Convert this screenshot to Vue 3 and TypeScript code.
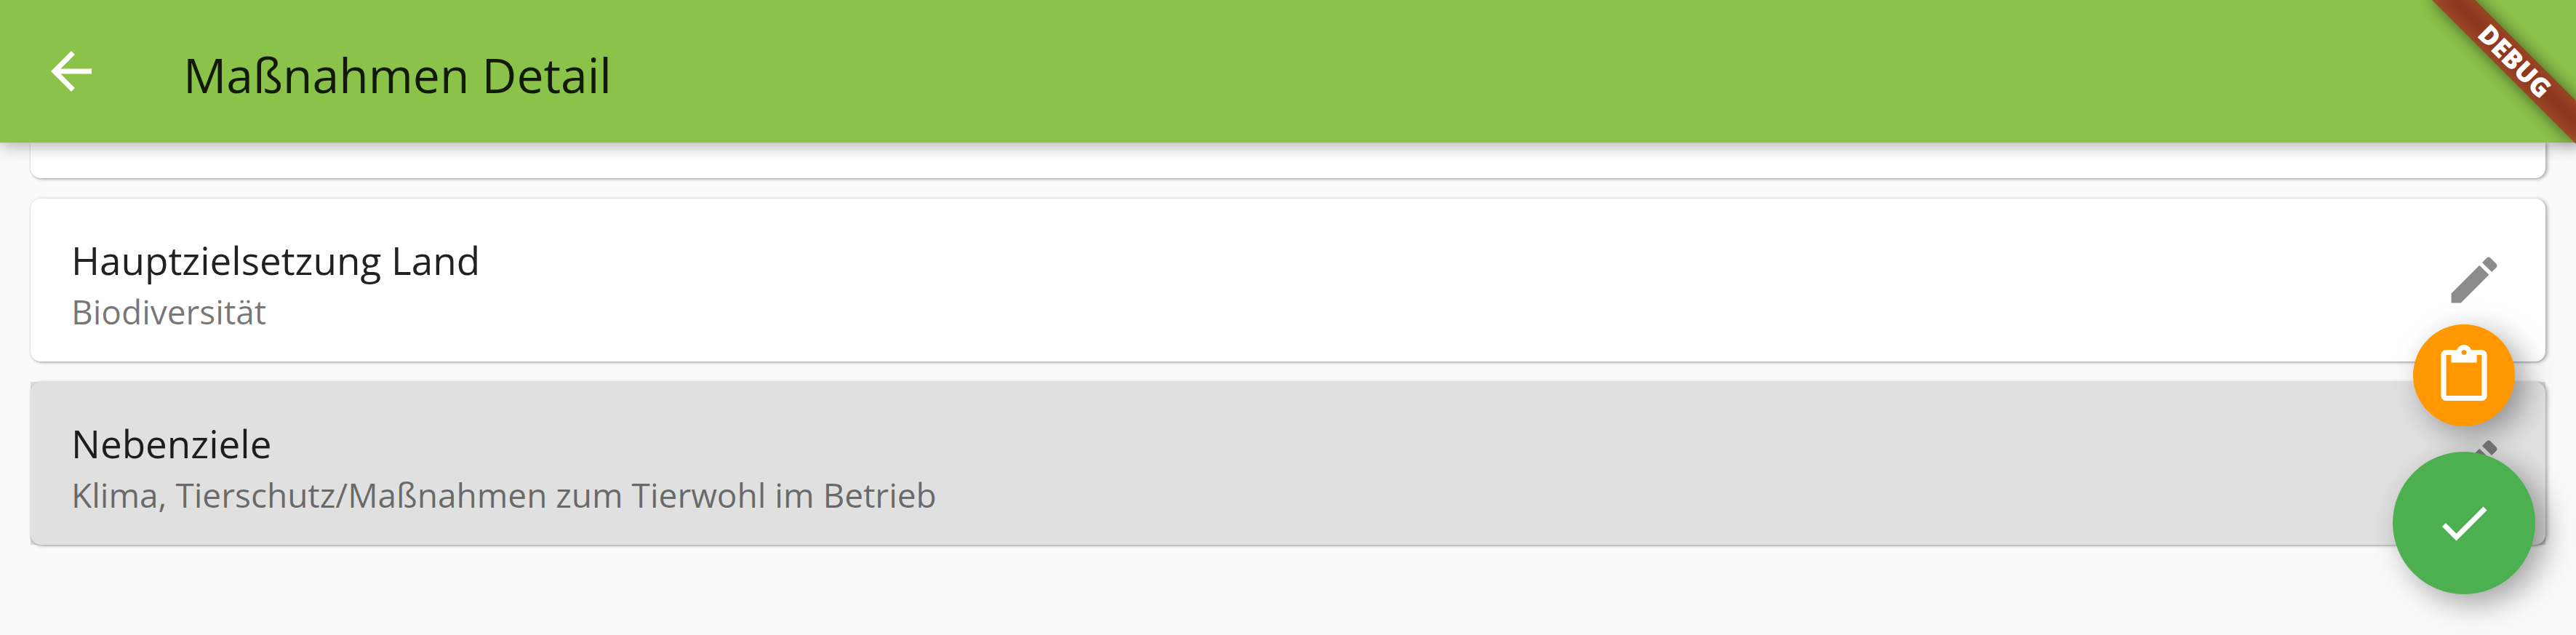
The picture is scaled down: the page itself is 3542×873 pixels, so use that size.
<script setup lang="ts">
interface Entry {
  id: string
  title: string
  value: string
  pressed: boolean
}

const entries: Entry[] = [
  { id: 'main-goal', title: 'Hauptzielsetzung Land', value: 'Biodiversität', pressed: false },
  {
    id: 'side-goals',
    title: 'Nebenziele',
    value: 'Klima, Tierschutz/Maßnahmen zum Tierwohl im Betrieb',
    pressed: true,
  },
]
</script>

<template>
  <div class="page">
    <header class="app-bar">
      <button class="icon-button back" type="button" aria-label="Zurück">
        <svg class="icon" viewBox="0 0 24 24" aria-hidden="true">
          <path d="M20 11H7.83l5.59-5.59L12 4l-8 8 8 8 1.41-1.41L7.83 13H20v-2z" />
        </svg>
      </button>
      <h1 class="heading">Maßnahmen Detail</h1>
    </header>

    <main class="list">
      <section class="card card-scrolled"></section>
      <section v-for="entry in entries" :key="entry.id" class="card">
        <div class="tile" :class="{ pressed: entry.pressed }">
          <div class="texts">
            <h2 class="title">{{ entry.title }}</h2>
            <p class="value">{{ entry.value }}</p>
          </div>
          <button class="icon-button edit" type="button" :aria-label="entry.title + ' bearbeiten'">
            <svg class="icon" viewBox="0 0 24 24" aria-hidden="true">
              <path
                d="M3 17.25V21h3.75L17.81 9.94l-3.75-3.75L3 17.25zM20.71 7.04c.39-.39.39-1.02 0-1.41l-2.34-2.34c-.39-.39-1.02-.39-1.41 0l-1.83 1.83 3.75 3.75 1.83-1.83z"
              />
            </svg>
          </button>
        </div>
      </section>
    </main>

    <div class="actions">
      <button class="fab fab-small" type="button" aria-label="Einfügen">
        <svg class="icon" viewBox="0 0 24 24" aria-hidden="true">
          <path
            d="M19 2h-4.18C14.4.84 13.3 0 12 0c-1.3 0-2.4.84-2.82 2H5c-1.1 0-2 .9-2 2v16c0 1.1.9 2 2 2h14c1.1 0 2-.9 2-2V4c0-1.1-.9-2-2-2zm-7 0c.55 0 1 .45 1 1s-.45 1-1 1-1-.45-1-1 .45-1 1-1zm7 18H5V4h2v3h10V4h2v16z"
          />
        </svg>
      </button>
      <button class="fab fab-large" type="button" aria-label="Bestätigen">
        <svg class="icon" viewBox="0 0 24 24" aria-hidden="true">
          <path d="M9 16.17L4.83 12l-1.42 1.41L9 19 21 7l-1.41-1.41z" />
        </svg>
      </button>
    </div>

    <div class="banner"><span class="banner-text">DEBUG</span></div>
  </div>
</template>

<style>
body {
  margin: 0;
  background: #fafafa;
}
</style>

<style scoped>
.page {
  position: relative;
  min-height: 100vh;
  overflow: hidden;
  background: #fafafa;
  font-family: 'Segoe UI', 'Open Sans', 'Noto Sans', sans-serif;
}

.app-bar {
  position: relative;
  z-index: 1;
  display: flex;
  align-items: center;
  gap: 112px;
  height: 196px;
  padding: 0 56px;
  box-sizing: border-box;
  background: #8bc34a;
  box-shadow: 0 4px 22px rgba(0, 0, 0, 0.32);
}

.icon-button {
  flex: none;
  display: flex;
  padding: 0;
  border: 0;
  background: none;
}

.icon {
  display: block;
  width: 84px;
  height: 84px;
  fill: currentColor;
}

.back {
  color: #fff;
}

.heading {
  margin: 0;
  padding-top: 8px;
  font-size: 66px;
  line-height: 92px;
  font-weight: 400;
  white-space: nowrap;
  color: rgba(0, 0, 0, 0.87);
}

.list {
  display: flex;
  flex-direction: column;
  gap: 28px;
  padding: 0 42px 124px;
}

.card {
  border-radius: 14px;
  background: #fff;
  box-shadow:
    3px 1px 5px rgba(0, 0, 0, 0.26),
    0 1px 3px rgba(0, 0, 0, 0.2);
}

.card-scrolled {
  height: 49px;
  border-radius: 0 0 14px 14px;
}

.tile {
  display: flex;
  align-items: center;
  justify-content: space-between;
  min-height: 224px;
  padding: 0 56px;
  box-sizing: border-box;
}

.pressed {
  background: rgba(0, 0, 0, 0.12);
}

.texts {
  padding-top: 10px;
}

.title,
.value {
  margin: 0;
  font-weight: 400;
  white-space: nowrap;
}

.title {
  font-size: 53px;
  line-height: 76px;
  color: rgba(0, 0, 0, 0.87);
}

.value {
  font-size: 46px;
  line-height: 64px;
  color: rgba(0, 0, 0, 0.54);
}

.edit {
  color: rgba(0, 0, 0, 0.45);
}

.actions {
  position: fixed;
  right: 56px;
  bottom: 56px;
  z-index: 2;
  display: flex;
  flex-direction: column;
  align-items: center;
  gap: 35px;
}

.fab {
  display: flex;
  align-items: center;
  justify-content: center;
  padding: 0;
  border: 0;
  border-radius: 50%;
  color: #fff;
  box-shadow: 14px 12px 42px rgba(0, 0, 0, 0.36);
}

.fab-small {
  width: 140px;
  height: 140px;
  background: #ff9800;
}

.fab-large {
  width: 196px;
  height: 196px;
  background: #4caf50;
}

/* Diagonal ribbon, turned around the window's top right corner. */
.banner {
  position: absolute;
  top: 98px;
  right: -140px;
  z-index: 3;
  display: flex;
  align-items: center;
  justify-content: center;
  width: 280px;
  height: 42px;
  transform: rotate(45deg);
  transform-origin: 140px -98px;
}

.banner::before,
.banner::after {
  content: '';
  position: absolute;
  inset: 0;
  z-index: -1;
}

.banner::before {
  background: rgba(0, 0, 0, 0.5);
  filter: blur(12px);
}

.banner::after {
  background: rgba(183, 28, 28, 0.63);
}

.banner-text {
  font-family: 'Segoe UI', 'Noto Sans', 'Open Sans', sans-serif;
  font-size: 36px;
  line-height: 42px;
  font-weight: 900;
  color: #fff;
}
</style>
